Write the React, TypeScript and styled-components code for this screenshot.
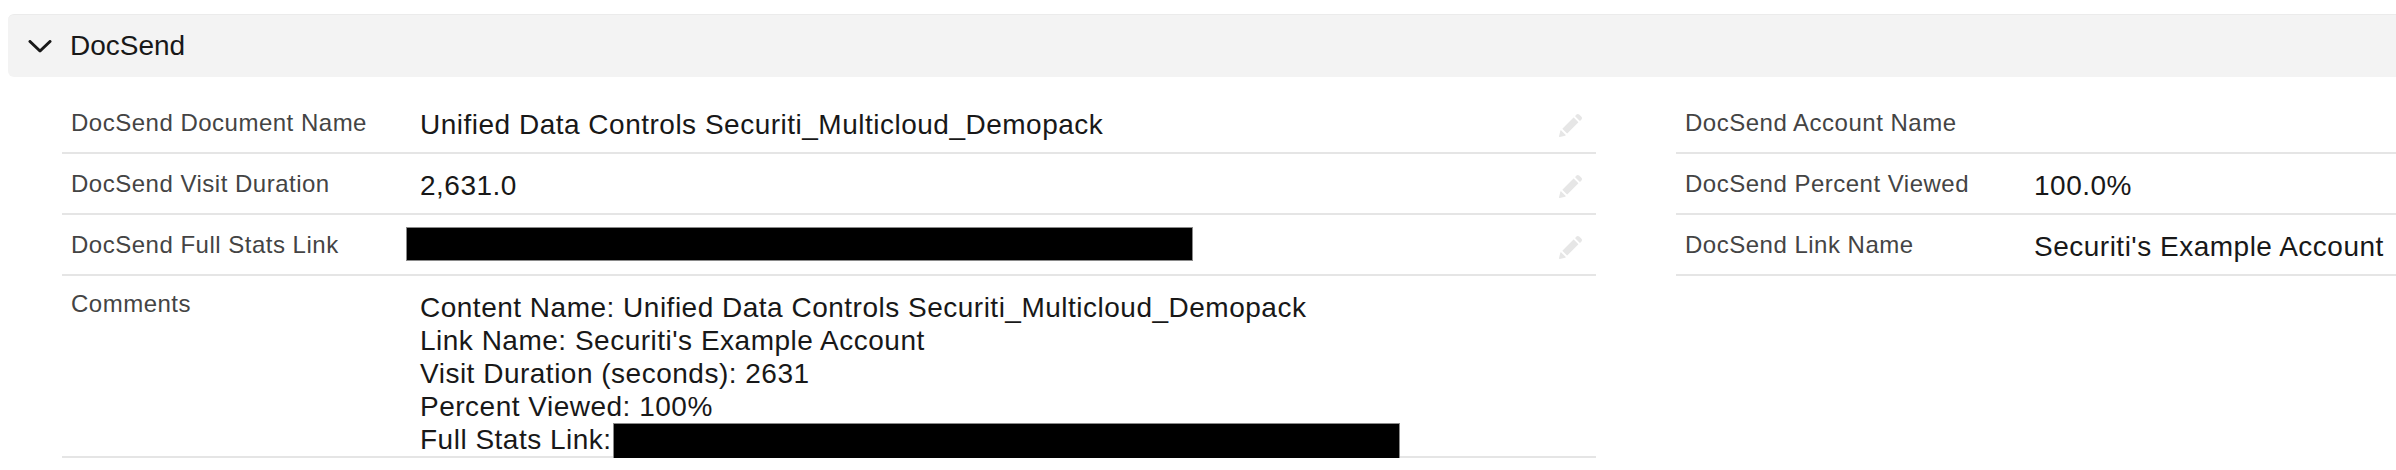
import React from 'react';
import styled, { createGlobalStyle } from 'styled-components';

const GlobalStyle = createGlobalStyle`
	html, body {
		margin: 0;
		padding: 0;
		overflow: hidden;
		background: #ffffff;
	}
	body {
		font-family: 'Liberation Sans', Arial, sans-serif;
		color: #181818;
	}
`;

const Section = styled.section`
	width: 3300px;
	padding: 14px 0 0 8px;
`;

const SectionHeader = styled.div`
	display: flex;
	align-items: center;
	gap: 18px;
	height: 62px;
	padding-left: 20px;
	background: #f3f3f3;
	border-top: 1px solid #ebebeb;
	border-radius: 6px;
`;

const Chevron = styled.svg`
	width: 24px;
	height: 13px;
	flex-shrink: 0;
`;

const SectionTitle = styled.h3`
	margin: 0;
	font-size: 28px;
	font-weight: 400;
	color: #181818;
`;

const FieldsGrid = styled.div`
	display: grid;
	grid-template-columns: 1534px 1534px;
	column-gap: 80px;
	align-items: start;
	margin: 16px 0 0 54px;
`;

const Column = styled.div`
	display: flex;
	flex-direction: column;
`;

const Row = styled.div<{ $multiline?: boolean }>`
	display: grid;
	grid-template-columns: 349px 1fr 40px;
	padding: ${({ $multiline }) => ($multiline ? '15px 13px 0 9px' : '15px 13px 10px 9px')};
	border-bottom: 2px solid #e5e5e5;
`;

const Label = styled.div<{ $multiline?: boolean }>`
	font-size: 24px;
	line-height: 30px;
	letter-spacing: 0.5px;
	color: #444444;
	margin-top: ${({ $multiline }) => ($multiline ? '-2px' : '0')};
`;

const Value = styled.div<{ $multiline?: boolean }>`
	font-size: 28px;
	line-height: ${({ $multiline }) => ($multiline ? '33px' : '34px')};
	min-height: 34px;
	letter-spacing: 0.5px;
	color: #181818;
	white-space: pre-line;
`;

const Redacted = styled.div`
	width: 787px;
	height: 34px;
	margin: -3px 0 0 -14px;
	background: #000000;
	border: 1px solid #8a8a8a;
	box-sizing: border-box;
`;

const InlineRedaction = styled.span`
	display: inline-block;
	position: relative;
	width: 787px;
	height: 33px;
	vertical-align: top;
	margin-left: 1px;

	&::after {
		content: '';
		position: absolute;
		left: 0;
		top: 0;
		width: 100%;
		height: 60px;
		background: #000000;
		border: 1px solid #8a8a8a;
		box-sizing: border-box;
	}
`;

const EditButton = styled.button`
	align-self: center;
	justify-self: end;
	display: flex;
	align-items: center;
	justify-content: center;
	width: 26px;
	height: 26px;
	padding: 0;
	border: none;
	background: none;
	color: #e6e6e6;
	cursor: pointer;
`;

const PencilIcon = () => (
	<svg width="25" height="25" viewBox="0 0 52 52" fill="currentColor">
		<path d="M9.5 33.4l8.9 8.9c.4.4 1 .4 1.4 0L42 20c.4-.4.4-1 0-1.4l-8.8-8.8c-.4-.4-1-.4-1.4 0L9.5 32.1c-.4.4-.4 1 0 1.3z" />
		<path d="M36.1 5.7c-.4.4-.4 1 0 1.4l8.8 8.8c.4.4 1 .4 1.4 0l2.5-2.5c1.6-1.5 1.6-3.9 0-5.5l-4.7-4.7c-1.6-1.6-4.1-1.6-5.7 0l-2.3 2.5z" />
		<path d="M2.1 48.2c-.2 1 .7 1.9 1.7 1.7l10.9-2.6c.4-.1.7-.3.9-.5l.2-.2c.2-.2.3-.9-.1-1.3l-9-9c-.4-.4-1.1-.3-1.3-.1l-.2.2c-.3.3-.4.6-.5.9L2.1 48.2z" />
	</svg>
);

interface Field {
	label: string;
	value?: string;
	redacted?: boolean;
}

const leftFields: Field[] = [
	{ label: 'DocSend Document Name', value: 'Unified Data Controls Securiti_Multicloud_Demopack' },
	{ label: 'DocSend Visit Duration', value: '2,631.0' },
	{ label: 'DocSend Full Stats Link', redacted: true },
];

const rightFields: Field[] = [
	{ label: 'DocSend Account Name', value: '' },
	{ label: 'DocSend Percent Viewed', value: '100.0%' },
	{ label: 'DocSend Link Name', value: "Securiti's Example Account" },
];

const commentLines = [
	'Content Name: Unified Data Controls Securiti_Multicloud_Demopack',
	"Link Name: Securiti's Example Account",
	'Visit Duration (seconds): 2631',
	'Percent Viewed: 100%',
];

const FieldRow: React.FC<{ field: Field }> = ({ field }) => (
	<Row>
		<Label>{field.label}</Label>
		<Value>{field.redacted ? <Redacted /> : field.value}</Value>
		<EditButton aria-label={`Edit ${field.label}`}>
			<PencilIcon />
		</EditButton>
	</Row>
);

export default function App() {
	return (
		<>
			<GlobalStyle />
			<Section>
				<SectionHeader>
					<Chevron viewBox="0 0 24 13" fill="none">
						<polyline
							points="2,1.5 12,11 22,1.5"
							stroke="#181818"
							strokeWidth="3"
							strokeLinecap="round"
							strokeLinejoin="round"
						/>
					</Chevron>
					<SectionTitle>DocSend</SectionTitle>
				</SectionHeader>

				<FieldsGrid>
					<Column>
						{leftFields.map((field) => (
							<FieldRow key={field.label} field={field} />
						))}
						<Row $multiline>
							<Label $multiline>Comments</Label>
							<Value $multiline>
								{commentLines.join('\n')}
								{'\n'}Full Stats Link:
								<InlineRedaction />
							</Value>
						</Row>
					</Column>
					<Column>
						{rightFields.map((field) => (
							<FieldRow key={field.label} field={field} />
						))}
					</Column>
				</FieldsGrid>
			</Section>
		</>
	);
}
